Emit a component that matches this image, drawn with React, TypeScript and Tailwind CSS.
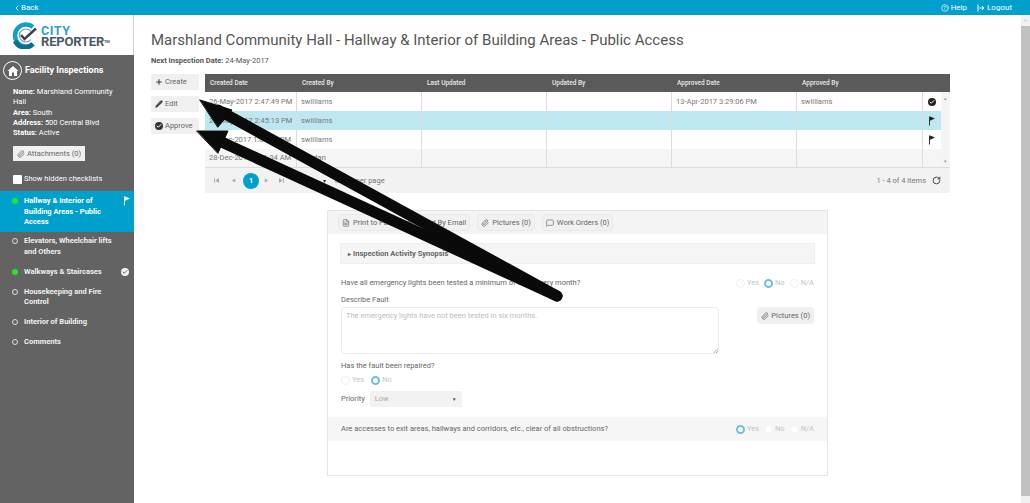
import React from 'react';
import { ChevronLeft, Check, CircleHelp, Paperclip, Pencil, Plus, FileText, RotateCw, ChevronDown, Mail, MessageSquare } from 'lucide-react';

const columns = [
    { label: 'Created Date', width: 'w-[92px]' },
    { label: 'Created By', width: 'w-[125px]' },
    { label: 'Last Updated', width: 'w-[125px]' },
    { label: 'Updated By', width: 'w-[125px]' },
    { label: 'Approved Date', width: 'w-[125px]' },
    { label: 'Approved By', width: 'w-[126px]' },
];

const rows = [
    { cells: ['26-May-2017 2:47:49 PM', 'swilliams', '', '', '13-Apr-2017 3:29:06 PM', 'swilliams'], icon: 'check', bg: 'bg-white', height: 'h-[19px]' },
    { cells: ['26-May-2017 2:45:13 PM', 'swilliams', '', '', '', ''], icon: 'flag', bg: 'bg-[#bde8f1]', height: 'h-[19px]' },
    { cells: ['26-Dec-2017 1:02:11 PM', 'swilliams', '', '', '', ''], icon: 'flag', bg: 'bg-white', height: 'h-[19px]' },
    { cells: ['28-Dec-2016 9:41:34 AM', 'kjordan', '', '', '', ''], icon: '', bg: 'bg-[#f5f5f5]', height: 'h-[18px]' },
];

const checklists = [
    { label: 'Elevators, Wheelchair lifts and Others', done: false },
    { label: 'Walkways & Staircases', done: true },
    { label: 'Housekeeping and Fire Control', done: false },
    { label: 'Interior of Building', done: false },
    { label: 'Comments', done: false },
];

const CheckDot = ({ className, tick = 'text-white' }: { className: string; tick?: string }) => (
    <span className={`flex items-center justify-center rounded-full ${className}`}>
        <Check size={6} strokeWidth={4} className={tick} />
    </span>
);

const Pennant = ({ color }: { color: string }) => (
    <svg width="8" height="10" viewBox="0 0 8 10">
        <path d="M1.5 0.5 V9.5" stroke={color} strokeWidth="0.9" />
        <path d="M2 0.5 L7 2.5 L2 4.8 Z" fill={color} />
    </svg>
);

const PagerIcon = ({ d }: { d: string }) => (
    <svg width="5" height="5" viewBox="0 0 6 6" fill="#aaaaaa">
        <path d={d} />
    </svg>
);

const Radio = ({ label, checked }: { label: string; checked?: boolean }) => (
    <span className="flex items-center gap-[2px] text-[7.5px] text-[#c4c4c4]">
        <span className={checked ? 'w-[9px] h-[9px] rounded-full border-[2.5px] border-[#6cc0d6] bg-white' : 'w-[9px] h-[9px] rounded-full border border-[#f0f0f0] bg-white'} />
        {label}
    </span>
);

const ToolButton = ({ icon, label }: { icon: React.ReactNode; label: string }) => (
    <div className="h-[17px] px-[3px] flex items-center gap-[3px] bg-[#f1f1f1] border border-[#e9e9e9] rounded-sm text-[7.5px] text-[#666]">
        {icon}
        {label}
    </div>
);

const Logo = () => (
    <div className="h-[40px] bg-white border-r border-[#d0d0d0] flex items-center pl-[11px] gap-[3px]">
        <svg width="27" height="27" viewBox="0 0 27 27" className="shrink-0">
            <path d="M22 5 A11 11 0 1 0 22 22" fill="none" stroke="#12a0c6" strokeWidth="4.5" />
            <path d="M4 19 A11 11 0 0 0 22 22" fill="none" stroke="#0e6f8c" strokeWidth="4.5" />
            <path d="M20 9.5 A6.5 6.5 0 1 0 20 17.5" fill="none" stroke="#8a989e" strokeWidth="1.2" />
            <path d="M10 13 L13.5 17 L25 6.5" fill="none" stroke="#36454d" strokeWidth="2.4" />
        </svg>
        <div className="flex flex-col font-bold leading-[11px] mt-[1px]">
            <span className="text-[12.5px] tracking-[0.6px] text-[#2aa3c4]">CITY</span>
            <span className="text-[13px] tracking-[-0.2px] text-[#4a5a62] whitespace-nowrap">
                REPORTER<span className="text-[4px] align-top">TM</span>
            </span>
        </div>
    </div>
);

const Sidebar = () => (
    <aside className="w-[134px] shrink-0 flex flex-col bg-[#636363] text-white">
        <Logo />
        <div className="pl-[3px] pt-[1px] flex items-center gap-[3px] h-[30px]">
            <span className="w-[19px] h-[19px] rounded-full border border-white flex items-center justify-center">
                <svg width="12" height="12" viewBox="0 0 12 12" fill="white">
                    <path d="M6 1 L11.5 6 L10 6 L10 11 L7 11 L7 7.5 L5 7.5 L5 11 L2 11 L2 6 L0.5 6 Z" />
                </svg>
            </span>
            <span className="text-[9px] leading-[11px] font-bold">Facility Inspections</span>
        </div>
        <div className="pl-[13px] pr-[14px] mt-[2px] text-[7.5px] leading-[10.3px]">
            <p><b>Name:</b> Marshland Community Hall</p>
            <p><b>Area:</b> South</p>
            <p><b>Address:</b> 500 Central Blvd</p>
            <p><b>Status:</b> Active</p>
        </div>
        <div className="ml-[13px] mt-[8px] w-[72px] h-[15px] bg-[#f0f0f0] flex items-center justify-center gap-[2px] text-[7.5px] text-[#666]">
            <Paperclip size={8} />
            Attachments (0)
        </div>
        <div className="ml-[13px] mt-[13px] flex items-center gap-[2px] text-[7.5px] leading-[10px]">
            <span className="w-[9px] h-[9px] bg-white rounded-[1px]" />
            Show hidden checklists
        </div>
        <div className="mt-[7px] h-[41px] bg-[#00a0cc] pl-[12px] pr-[3px] py-[5px] flex items-start gap-[6px] font-bold text-[7.5px] leading-[10.3px]">
            <span className="w-[6px] h-[6px] mt-[2px] rounded-full bg-[#22e822] shrink-0" />
            <span className="w-[90px]">Hallway & Interior of Building Areas - Public Access</span>
            <span className="ml-auto shrink-0"><Pennant color="white" /></span>
        </div>
        <div className="flex flex-col gap-[9.7px] pt-[4px]">
            {checklists.map((item) => (
                <div key={item.label} className="pl-[12px] pr-[3px] flex items-start gap-[6px] font-bold text-[7.5px] leading-[10.3px] text-[#f0f0f0]">
                    <span className={item.done ? 'w-[6px] h-[6px] mt-[2px] rounded-full bg-[#22e822] shrink-0' : 'w-[6px] h-[6px] mt-[2px] rounded-full border-[1.5px] border-[#dddddd] shrink-0'} />
                    <span className="w-[90px]">{item.label}</span>
                    {item.done && <CheckDot className="w-[8px] h-[8px] bg-[#f0f0f0] ml-auto mr-[2px] mt-[1px]" tick="text-[#636363]" />}
                </div>
            ))}
        </div>
    </aside>
);

const GridTable = () => (
    <div className="w-[745px] flex flex-col text-[7.5px] leading-[10px] text-[#777]">
        <div className="h-[18px] bg-[#5a5a5a] flex items-center text-[6.5px] font-medium text-[#e8e8e8]">
            {columns.map((col) => (
                <div key={col.label} className={`${col.width} pl-[5px]`}>{col.label}</div>
            ))}
        </div>
        <div className="flex">
            <div className="w-[736px] flex flex-col">
                {rows.map((row, i) => (
                    <div key={i} className={`${row.height} flex items-center ${row.bg}`}>
                        {row.cells.map((cell, j) => (
                            <div key={j} className={`${columns[j].width} h-full pl-[4px] flex items-center border-r border-[#dcdcdc] whitespace-nowrap`}>
                                {cell}
                            </div>
                        ))}
                        <div className="flex-1 flex items-center justify-center">
                            {row.icon === 'check' && <CheckDot className="w-[8px] h-[8px] bg-[#222]" />}
                            {row.icon === 'flag' && <Pennant color="#222" />}
                        </div>
                    </div>
                ))}
            </div>
            <div className="w-[9px] bg-[#f4f4f4] flex flex-col justify-between items-center text-[5px] text-[#999] py-[1px]">
                <span>▴</span>
                <span>▾</span>
            </div>
        </div>
        <div className="h-[26px] bg-[#f2f2f2] border-t border-[#dcdcdc] flex items-center pl-[9px] pr-[9px]">
            <span className="w-[17px]"><PagerIcon d="M0 0 H1 V6 H0 Z M6 0 V6 L1.5 3 Z" /></span>
            <span className="w-[12px]"><PagerIcon d="M5 0.5 V5.5 L1 3 Z" /></span>
            <span className="w-[16px] h-[16px] rounded-full bg-[#00a0cc] text-white flex items-center justify-center font-bold text-[8px]">1</span>
            <span className="ml-[5px] w-[15px]"><PagerIcon d="M1 0.5 V5.5 L5 3 Z" /></span>
            <span className="w-[44px]"><PagerIcon d="M0 0 V6 L4.5 3 Z M5 0 H6 V6 H5 Z" /></span>
            <span className="text-[6px] text-[#333] w-[8px]">▾</span>
            <span className="ml-[4px]">items per page</span>
            <span className="ml-auto">1 - 4 of 4 items</span>
            <RotateCw size={9} strokeWidth={2.5} className="ml-[6px] text-[#444]" />
        </div>
    </div>
);

const ChecklistForm = () => (
    <div className="ml-[176px] mt-[17px] w-[501px] h-[266px] border border-[#e4e4e4] flex flex-col text-[7.5px] leading-[10px] text-[#666]">
        <div className="h-[23px] bg-[#f4f4f4] flex items-center gap-[7px] pl-[10px]">
            <ToolButton icon={<FileText size={8} />} label="Print to PDF" />
            <ToolButton icon={<Mail size={8} />} label="Send By Email" />
            <ToolButton icon={<Paperclip size={8} />} label="Pictures (0)" />
            <ToolButton icon={<MessageSquare size={8} />} label="Work Orders (0)" />
        </div>
        <div className="mx-[12px] mt-[9px] h-[21px] bg-[#f5f5f5] border border-[#eeeeee] flex items-center pl-[7px] font-bold">
            <span className="text-[6px] mr-[2px]">▸</span>
            Inspection Activity Synopsis
        </div>
        <div className="mx-[13px] mt-[14px] flex items-center justify-between">
            <span>Have all emergency lights been tested a minimum of once every month?</span>
            <span className="flex gap-[5px]">
                <Radio label="Yes" />
                <Radio label="No" checked />
                <Radio label="N/A" />
            </span>
        </div>
        <div className="mx-[13px] mt-[7px]">Describe Fault</div>
        <div className="mx-[13px] mt-[2px] flex items-start justify-between">
            <div className="relative w-[378px] h-[47px] border border-[#ececec] rounded-sm px-[4px] py-[3px] text-[#bcbcbc]">
                The emergency lights have not been tested in six months.
                <svg className="absolute right-0 bottom-0" width="5" height="5" viewBox="0 0 5 5" stroke="#888888" strokeWidth="0.7">
                    <path d="M0.5 5 L5 0.5 M3 5 L5 3" />
                </svg>
            </div>
            <div className="h-[17px] px-[4px] flex items-center gap-[2px] bg-[#efefef] rounded-sm text-[#666]">
                <Paperclip size={8} />
                Pictures (0)
            </div>
        </div>
        <div className="mx-[13px] mt-[7px]">Has the fault been repaired?</div>
        <div className="mx-[13px] mt-[4px] flex gap-[7px]">
            <Radio label="Yes" />
            <Radio label="No" checked />
        </div>
        <div className="mx-[13px] mt-[6px] flex items-center gap-[5px]">
            Priority
            <div className="w-[92px] h-[16px] bg-[#f2f2f2] flex items-center justify-between px-[5px] text-[#aaa]">
                Low
                <span className="text-[5px] text-[#555]">▼</span>
            </div>
        </div>
        <div className="mt-[10px] h-[24px] bg-[#f6f6f6] flex items-center justify-between px-[13px]">
            <span>Are accesses to exit areas, hallways and corridors, etc., clear of all obstructions?</span>
            <span className="flex gap-[5px]">
                <Radio label="Yes" checked />
                <Radio label="No" />
                <Radio label="N/A" />
            </span>
        </div>
    </div>
);

const Arrows = () => (
    <svg className="absolute inset-0 pointer-events-none" width="1030" height="503" viewBox="0 0 1030 503">
        <g fill="#0a0a0a" stroke="#0a0a0a" strokeLinecap="round">
            <path d="M218 110 L557 296" strokeWidth="11" />
            <path d="M215 139 L557 296" strokeWidth="11" />
            <path d="M200 100 L232 110 L218 127 Z" strokeWidth="1" />
            <path d="M197 131 L228 131 L218 153 Z" strokeWidth="1" />
        </g>
    </svg>
);

export default function App() {
    return (
        <div className="relative w-[1030px] h-[503px] overflow-hidden bg-white font-['Roboto',sans-serif]">
            <header className="h-[15px] bg-[#00a0cc] flex items-center justify-between pl-[13px] pr-[18px] text-[8px] leading-[10px] text-white">
                <span className="flex items-center">
                    <ChevronLeft size={8} strokeWidth={3} />
                    Back
                </span>
                <span className="flex items-center gap-[10px]">
                    <span className="flex items-center gap-[2px]"><CircleHelp size={8} />Help</span>
                    <span className="flex items-center gap-[2px]">
                        <svg width="8" height="8" viewBox="0 0 8 8" fill="none" stroke="white" strokeWidth="1">
                            <path d="M1 0.5 V7.5 M2.5 4 H7 M5 2 L7 4 L5 6" />
                        </svg>
                        Logout
                    </span>
                </span>
            </header>
            <div className="flex h-[488px]">
                <Sidebar />
                <main className="flex-1 pl-[17px] pt-[15px]">
                    <h1 className="text-[15px] leading-[20px] text-[#555] whitespace-nowrap">
                        Marshland Community Hall - Hallway & Interior of Building Areas - Public Access
                    </h1>
                    <p className="mt-[6px] text-[7.5px] leading-[10px] text-[#555]">
                        <b>Next Inspection Date:</b> 24-May-2017
                    </p>
                    <div className="mt-[8px] flex gap-[6px]">
                        <div className="w-[48px] flex flex-col gap-[6px] text-[7.5px] leading-[10px] text-[#666]">
                            <div className="h-[16px] bg-[#f0f0f0] flex items-center gap-[2px] pl-[4px]"><Plus size={8} strokeWidth={3} className="text-[#333]" />Create</div>
                            <div className="h-[16px] bg-[#f0f0f0] flex items-center gap-[2px] pl-[4px]"><Pencil size={8} fill="#444" className="text-[#444]" />Edit</div>
                            <div className="h-[16px] bg-[#f0f0f0] flex items-center gap-[2px] pl-[4px]"><CheckDot className="w-[8px] h-[8px] bg-[#333]" />Approve</div>
                        </div>
                        <GridTable />
                    </div>
                    <ChecklistForm />
                </main>
                <div className="w-[9px] shrink-0 bg-[#f1f1f1] flex flex-col items-center">
                    <ChevronDown size={5} className="rotate-180 text-[#888] my-[3px]" />
                    <div className="w-full h-[470px] bg-[#c1c1c1]" />
                </div>
            </div>
            <Arrows />
        </div>
    );
}
